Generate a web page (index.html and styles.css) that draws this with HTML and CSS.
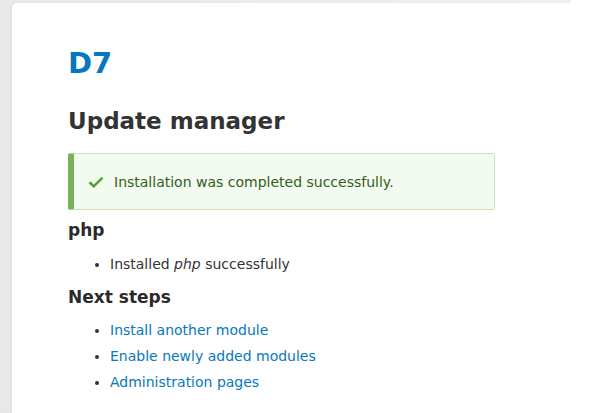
FILE: index.html
```html
<!DOCTYPE html>
<html>
<head>
<meta charset="utf-8">
<link rel="stylesheet" href="styles.css">
</head>
<body>
<div class="page">
  <main class="card">
    <h1 class="site-name">D7</h1>
    <h2 class="page-title">Update manager</h2>
    <div class="message">
      <svg class="check" width="16" height="12" viewBox="0 0 16 12"><path d="M1.5 6.2 L5.8 10.3 L14.5 1.6" fill="none" stroke="#5da13b" stroke-width="2.6"/></svg>
      <span>Installation was completed successfully.</span>
    </div>
    <h3 class="section">php</h3>
    <ul class="list">
      <li>Installed <em>php</em> successfully</li>
    </ul>
    <h3 class="section">Next steps</h3>
    <ul class="list links">
      <li><a href="#">Install another module</a></li>
      <li><a href="#">Enable newly added modules</a></li>
      <li><a href="#">Administration pages</a></li>
    </ul>
  </main>
</div>
</body>
</html>
```
FILE: styles.css
```css
html, body {
  margin: 0;
  padding: 0;
  background: #fff;
  font-family: "DejaVu Sans", sans-serif;
  color: #333;
}
.page {
  width: 559px;
  height: 413px;
  padding: 3px 0 0 12px;
  background: linear-gradient(to right, #e8e8e8, #f2f2f2);
  overflow: hidden;
}
.card {
  display: block;
  background: #fff;
  border-top-left-radius: 5px;
  height: 420px;
  padding: 42px 0 0 56px;
  box-shadow: -1px 0 3px rgba(0,0,0,0.06);
}
.site-name {
  margin: 0;
  font-size: 29px;
  line-height: 36px;
  font-weight: bold;
  color: #0678be;
}
.page-title {
  margin: 26px 0 0;
  font-size: 23px;
  line-height: 28px;
  font-weight: bold;
  color: #333;
}
.message {
  display: flex;
  align-items: center;
  gap: 10px;
  box-sizing: border-box;
  width: 427px;
  height: 57px;
  margin-top: 18px;
  padding-left: 14px;
  background: #f3faef;
  border: 1px solid #c9e1bd;
  border-left: 6px solid #77b259;
  border-radius: 2px;
  color: #325e1c;
  font-size: 14px;
}
.check { display: block; }
.section {
  margin: 9px 0 0;
  font-size: 17px;
  line-height: 22px;
  font-weight: bold;
  color: #2a2a2a;
}
.list {
  margin: 10px 0 0;
  padding-left: 42px;
  font-size: 14px;
  line-height: 26px;
  color: #333;
}
.list.links { margin-top: 9px; }
.list li { padding-left: 0; }
.links a {
  color: #0678be;
  text-decoration: none;
}
```
